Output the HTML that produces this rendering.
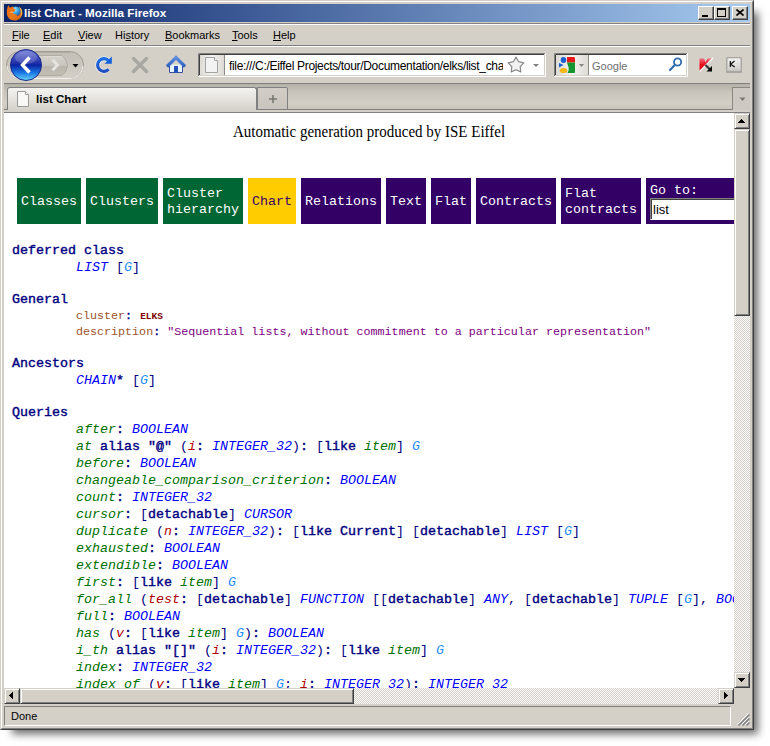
<!DOCTYPE html>
<html><head><meta charset="utf-8">
<style>
html,body{margin:0;padding:0;background:#fff;width:770px;height:746px;overflow:hidden;}
*{box-sizing:border-box;}
.a{position:absolute;}
#win{position:absolute;left:0;top:0;width:754px;height:730px;background:#d4d0c8;
 border:1px solid;border-color:#d4d0c8 #404040 #404040 #d4d0c8;
 box-shadow:8px 8px 8px -4px rgba(0,0,0,0.58);}
#win2{position:absolute;left:0;top:0;width:752px;height:728px;border:1px solid;border-color:#fff #808080 #808080 #fff;}
.ui{font-family:"Liberation Sans",sans-serif;}
#title{left:4px;top:4px;width:746px;height:18px;background:linear-gradient(to right,#0a246a,#a6caf0);}
#title .t{left:20px;top:1px;color:#fff;font:bold 11.7px "Liberation Sans",sans-serif;line-height:16px;white-space:nowrap;}
.tb{width:16px;height:14px;top:6px;background:#d4d0c8;border:1px solid;border-color:#fff #404040 #404040 #fff;box-shadow:inset -1px -1px 0 #808080;}
.menu{top:27px;font:11px "Liberation Sans",sans-serif;color:#000;white-space:nowrap;line-height:16px;}
.menu u{text-decoration:underline;text-underline-offset:1px;text-decoration-thickness:1px;}
.hl{background:#808080;height:1px;}
.wl{background:#fff;height:1px;}
pre,.m{font-family:"Liberation Mono",monospace;font-size:13.333px;margin:0;}
.ln{position:absolute;white-space:pre;font-family:"Liberation Mono",monospace;font-size:13.333px;line-height:17px;}
.k{color:#000080;font-weight:normal;-webkit-text-stroke:0.4px #000080;}
.c{color:#0000ff;font-style:italic;}
.g{color:#1e8cff;font-style:italic;}
.f{color:#007000;font-style:italic;}
.ar{color:#b00000;font-style:italic;}
.br{color:#000080;}
.ix{color:#a0522d;}
.s{color:#800080;}
.elks{color:#800000;font-weight:bold;font-size:9.5px;margin-left:1px;}
.nav{position:absolute;top:65px;height:46px;color:#fff;font-family:"Liberation Mono",monospace;font-size:13.333px;line-height:16px;padding:2px 4px 0;display:flex;align-items:center;white-space:pre;}
.ng{background:#006633;}
.np{background:#330066;}
.ny{background:#ffcc00;color:#330066;}
.chk{background-color:#fff;background-image:linear-gradient(45deg,#d4d0c8 25%,transparent 25%,transparent 75%,#d4d0c8 75%),linear-gradient(45deg,#d4d0c8 25%,transparent 25%,transparent 75%,#d4d0c8 75%);background-size:2px 2px;background-position:0 0,1px 1px;}
.btn3d{background:#d4d0c8;border:1px solid;border-color:#d4d0c8 #404040 #404040 #d4d0c8;box-shadow:inset 1px 1px 0 #fff,inset -1px -1px 0 #808080;}
</style></head>
<body>
<div id="win"><div id="win2"></div></div>

<!-- title bar -->
<div id="title" class="a">
  <svg class="a" style="left:1px;top:-1px" width="18" height="18" viewBox="0 0 18 18">
    <defs><radialGradient id="glb" cx="0.35" cy="0.3" r="0.8"><stop offset="0" stop-color="#a8f4ff"/><stop offset="0.45" stop-color="#40a8e8"/><stop offset="1" stop-color="#1a3c8a"/></radialGradient>
    <linearGradient id="fox" x1="0" y1="0" x2="1" y2="1"><stop offset="0" stop-color="#f06a10"/><stop offset="0.55" stop-color="#e87a18"/><stop offset="1" stop-color="#d86010"/></linearGradient>
    <linearGradient id="tail" x1="0" y1="0" x2="0" y2="1"><stop offset="0" stop-color="#f8e060"/><stop offset="1" stop-color="#f09020"/></linearGradient></defs>
    <circle cx="10.8" cy="8.6" r="5.2" fill="url(#glb)"/>
    <path d="M13.8 3.5 C16.5 5 17.8 8 17.3 11 C16.6 14.8 13.5 17.5 9.5 17.5 C5 17.5 2 14.5 1.8 10 C1.7 7.5 2.2 5 3.2 2.2 L5 4.8 L8 3.2 L9 5.8 L10.5 6.8 L9.2 8.8 L7.8 9.2 L8.5 10.8 L11 11.5 L12.5 13 C14.8 12.2 16 9.8 15.6 7.2 C15.3 5.8 14.6 4.5 13.8 3.5 Z" fill="url(#fox)"/>
    <path d="M14 3.8 C16.3 5.3 17.5 8 17.1 10.8 C16.8 12.5 16 14 14.8 15 C15.8 13 16.2 10.5 15.6 7.5 C15.3 6 14.8 4.8 14 3.8 Z" fill="url(#tail)"/>
    <path d="M5.5 9.2 L8 9.2" stroke="#ffe0b0" stroke-width="1" opacity="0.8"/>
  </svg>
  <div class="a t">list Chart - Mozilla Firefox</div>
</div>
<div class="a tb" style="left:698px"><div class="a" style="left:3px;top:8px;width:6px;height:2px;background:#000"></div></div>
<div class="a tb" style="left:714px"><div class="a" style="left:2px;top:1px;width:9px;height:9px;border:1px solid #000;border-top-width:2px"></div></div>
<div class="a tb" style="left:732px"><svg class="a" style="left:3px;top:2px" width="8" height="7" viewBox="0 0 8 7"><path d="M0.5 0.5 L7.5 6.5 M7.5 0.5 L0.5 6.5" stroke="#000" stroke-width="1.6"/></svg></div>

<!-- menu -->
<div class="a hl" style="left:4px;top:23px;width:746px"></div>
<div class="a wl" style="left:4px;top:24px;width:746px"></div>
<div class="a menu" style="left:12px"><u>F</u>ile</div>
<div class="a menu" style="left:43px"><u>E</u>dit</div>
<div class="a menu" style="left:78px"><u>V</u>iew</div>
<div class="a menu" style="left:115px">Hi<u>s</u>tory</div>
<div class="a menu" style="left:165px"><u>B</u>ookmarks</div>
<div class="a menu" style="left:232px"><u>T</u>ools</div>
<div class="a menu" style="left:273px"><u>H</u>elp</div>
<div class="a hl" style="left:4px;top:45px;width:746px"></div>
<div class="a wl" style="left:4px;top:46px;width:746px"></div>

<!-- toolbar -->
<!--TOOLBAR-->
<svg class="a" style="left:0;top:46px" width="754" height="37" viewBox="0 46 754 37">
 <defs>
  <linearGradient id="pill" x1="0" y1="0" x2="0" y2="1"><stop offset="0" stop-color="#c2beb6"/><stop offset="1" stop-color="#d4d0c8"/></linearGradient>
  <linearGradient id="fwd" x1="0" y1="0" x2="0" y2="1"><stop offset="0" stop-color="#d6d3cc"/><stop offset="0.5" stop-color="#c8c4bd"/><stop offset="0.5" stop-color="#b9b5ad"/><stop offset="1" stop-color="#c2beb6"/></linearGradient>
  <linearGradient id="back" x1="0" y1="0" x2="0" y2="1"><stop offset="0" stop-color="#6b77d6"/><stop offset="0.45" stop-color="#1f2fa8"/><stop offset="0.5" stop-color="#0a22a0"/><stop offset="0.75" stop-color="#1a78e6"/><stop offset="1" stop-color="#66d4fa"/></linearGradient>
  <linearGradient id="rel" x1="0" y1="0" x2="0" y2="1"><stop offset="0" stop-color="#1a6ee8"/><stop offset="1" stop-color="#1f4fc0"/></linearGradient>
  <linearGradient id="roof" x1="0" y1="0" x2="0" y2="1"><stop offset="0" stop-color="#5c8ee0"/><stop offset="1" stop-color="#3060c0"/></linearGradient>
  <linearGradient id="ibox" x1="0" y1="0" x2="1" y2="0"><stop offset="0" stop-color="#dedbd5"/><stop offset="0.5" stop-color="#f4f3f1"/><stop offset="1" stop-color="#dedbd5"/></linearGradient>
 </defs>
 <!-- back/forward pill -->
 <rect x="6.5" y="51.5" width="77" height="27" rx="13.5" fill="url(#pill)" stroke="#a29e96"/>
 <path d="M20 52.5 L70 52.5" stroke="#b0aca4" stroke-width="1"/>
 <path d="M7 66 A13 13 0 0 0 20 78.5 L70 78.5 A13 13 0 0 0 83 66" fill="none" stroke="#f2f1ee" stroke-width="1"/>
 <path d="M30 55.5 L62 55.5 Q67.5 60 67.5 65.5 Q67.5 71 62 75.5 L30 75.5 Z" fill="url(#fwd)" stroke="#aeaaa2"/>
 <path d="M44 56.5 L61.5 56.5" stroke="#dedbd5" stroke-width="1"/>
 <path d="M52.5 59.8 L57.5 65 L52.5 70.2" fill="none" stroke="#e6e4e0" stroke-width="3"/>
 <path d="M72.5 64 L78.5 64 L75.5 67.5 Z" fill="#000"/>
 <circle cx="26" cy="65" r="15.5" fill="url(#back)" stroke="#1c2a88" stroke-width="1"/>
 <ellipse cx="26" cy="57.5" rx="11" ry="6.5" fill="#fff" opacity="0.18"/>
 <path d="M29.5 57.5 L22.5 65 L29.5 72.5" fill="none" stroke="#fff" stroke-width="3.4" stroke-linejoin="miter"/>
 <!-- reload -->
 <path d="M108.2 60.4 A6.3 6.3 0 1 0 108.6 69.2" fill="none" stroke="#fff" stroke-width="5" opacity="0.5"/>
 <path d="M108.2 60.4 A6.3 6.3 0 1 0 108.6 69.2" fill="none" stroke="url(#rel)" stroke-width="3.2"/>
 <path d="M104.5 63.8 L111.8 63.8 L111.8 56.5 Z" fill="#1060e0"/>
 <!-- stop -->
 <path d="M133.5 58.5 L146.5 71.5 M146.5 58.5 L133.5 71.5" stroke="#a9a7a2" stroke-width="3.4" stroke-linecap="round"/>
 <!-- home -->
 <path d="M169.5 64.5 L169.5 72.5 L182.5 72.5 L182.5 64.5" fill="#e6f2fc" stroke="#3a4fa0"/>
 <path d="M167 66.5 L176 57.5 L185 66.5" fill="none" stroke="url(#roof)" stroke-width="3.2" stroke-linejoin="miter"/>
 <rect x="174" y="66" width="4" height="7" fill="#2454b8"/>
 <!-- url bar -->
 <rect x="198" y="53" width="347" height="24" fill="#fff"/>
 <path d="M198.5 76 L198.5 53.5 L545 53.5" fill="none" stroke="#808080"/>
 <path d="M199.5 75 L199.5 54.5 L544 54.5" fill="none" stroke="#404040"/>
 <path d="M198 76.5 L545.5 76.5 L545.5 53" fill="none" stroke="#fff"/>
 <path d="M199 75.5 L544.5 75.5 L544.5 54" fill="none" stroke="#d4d0c8"/>
 <rect x="200" y="55" width="24" height="20" fill="url(#ibox)"/>
 <rect x="224" y="55" width="1" height="20" fill="#8e8b86"/>
 <path d="M205.5 57.5 L214.5 57.5 L217.5 60.5 L217.5 72.5 L205.5 72.5 Z" fill="#f3f3f3" stroke="#a2a2a2"/>
 <path d="M214.5 57.5 L214.5 60.5 L217.5 60.5" fill="#fff" stroke="#a2a2a2"/>
 <path d="M516.0 57.1 L518.6 61.7 L523.8 62.8 L520.2 66.7 L520.8 71.9 L516.0 69.7 L511.2 71.9 L511.8 66.7 L508.2 62.8 L513.4 61.7 Z" fill="#f2f2f2" stroke="#8a8a8a" stroke-width="1.2" stroke-linejoin="round"/>
 <path d="M533 64 L539 64 L536 67 Z" fill="#808080"/>
 <!-- search -->
 <rect x="554" y="53" width="133" height="24" fill="#fff"/>
 <path d="M554.5 76 L554.5 53.5 L687 53.5" fill="none" stroke="#808080"/>
 <path d="M555.5 75 L555.5 54.5 L686 54.5" fill="none" stroke="#404040"/>
 <path d="M554 76.5 L687.5 76.5 L687.5 53" fill="none" stroke="#fff"/>
 <path d="M555 75.5 L686.5 75.5 L686.5 54" fill="none" stroke="#d4d0c8"/>
 <rect x="556" y="55" width="32" height="20" fill="url(#ibox)"/>
 <rect x="588" y="55" width="1" height="20" fill="#8e8b86"/>
 <ellipse cx="563.5" cy="60" rx="2.8" ry="3" fill="#1a5fd0"/>
 <path d="M559 63 L563.5 65 L559 67.5 Z" fill="#1a5fd0"/>
 <ellipse cx="563.5" cy="70.5" rx="3.8" ry="2.6" fill="#f2b81a"/>
 <path d="M567 57 L574 57 Q575 57 575 58.5 L575 62.5 L567 62.5 Z" fill="#e61818"/>
 <path d="M567 62.5 L575 62.5 L575 72 Q575 73 574 73 L567.5 73 Q569.5 70 568.5 67 Q567.5 64.5 567 62.5 Z" fill="#14962e"/>
 <path d="M579 64 L584 64 L581.5 67 Z" fill="#858585"/>
 <circle cx="677.6" cy="62" r="3.6" fill="none" stroke="#2f6db0" stroke-width="1.8"/>
 <path d="M675 64.8 L670 70" stroke="#2f6db0" stroke-width="2.2" stroke-linecap="round"/>
 <!-- kaspersky -->
 <defs><linearGradient id="kred" x1="0" y1="0" x2="0" y2="1"><stop offset="0" stop-color="#f07080"/><stop offset="0.45" stop-color="#e81020"/><stop offset="1" stop-color="#e00010"/></linearGradient>
 <linearGradient id="kkey" x1="0" y1="0" x2="0" y2="1"><stop offset="0" stop-color="#f2f2f0"/><stop offset="1" stop-color="#d2d1ce"/></linearGradient></defs>
 <path d="M699.5 58.5 L704 58.5 L705.5 62 L707.5 58.5 L712.5 58.5 L699.5 71.5 Z" fill="url(#kred)"/>
 <path d="M713 58 L699.5 71.5" stroke="#fff" stroke-width="1.3"/>
 <path d="M705.5 65 L709.5 69" stroke="#333" stroke-width="2.2"/>
 <path d="M712 66 L712 71.5 L706.5 71.5 Z" fill="#000"/>
 <!-- K button -->
 <rect x="726" y="57" width="16" height="16" rx="1.5" fill="#a8a6a2"/>
 <rect x="727" y="58" width="14" height="13" rx="1" fill="#c8c7c4"/>
 <rect x="728" y="58.5" width="12" height="11" fill="url(#kkey)"/>
 <path d="M730.3 61 L730.3 67 M734.5 61 L730.6 64.2 L734.7 67" fill="none" stroke="#111" stroke-width="1.2"/>
</svg>
<div class="a ui" style="left:229px;top:59px;width:274px;overflow:hidden;white-space:nowrap;font-size:12px;letter-spacing:-0.32px;line-height:14px;color:#000">file:///C:/Eiffel Projects/tour/Documentation/elks/list_chart.html</div>
<div class="a ui" style="left:592px;top:60px;white-space:nowrap;font-size:11px;line-height:13px;color:#6e6e6e">Google</div>
<!--/TOOLBAR-->

<div class="a hl" style="left:4px;top:83px;width:746px"></div>

<!-- tab strip -->
<div class="a" style="left:4px;top:84px;width:746px;height:28px;background:linear-gradient(#b5b1a9 0%,#c9c5bd 30%,#d3cfc7 70%,#c9c5bd 88%,#d4d0c8 89%,#d4d0c8 100%)"></div>
<div class="a hl" style="left:4px;top:109px;width:746px"></div>
<div class="a" style="left:7px;top:87px;width:250px;height:23px;background:linear-gradient(#f4f3f0 0%,#e2dfda 60%,#d6d3cc 100%);border:1px solid #808080;border-bottom:none;border-radius:3px 3px 0 0"></div>
<div class="a ui" style="left:36px;top:92px;font-weight:bold;font-size:11.6px;line-height:14px">list Chart</div>
<svg class="a" style="left:16px;top:90px" width="14" height="18" viewBox="16 90 14 18">
 <path d="M17.5 91.5 L25.5 91.5 L28.5 94.5 L28.5 106.5 L17.5 106.5 Z" fill="#f8f8f6" stroke="#9a9a98"/>
 <path d="M25.5 91.5 L25.5 94.5 L28.5 94.5" fill="#fff" stroke="#9a9a98"/>
</svg>
<div class="a" style="left:256px;top:87px;width:32px;height:23px;background:linear-gradient(#d2cec7,#c9c5be);border:1px solid #808080;border-left-width:2px;border-radius:2px 2px 0 0"></div>
<svg class="a" style="left:266px;top:92px" width="14" height="14" viewBox="0 0 14 14"><path d="M7 3 L7 11 M3 7 L11 7" stroke="#7a7874" stroke-width="1.6"/></svg>
<div class="a" style="left:732px;top:87px;width:18px;height:23px;background:#cdc9c2;border-left:1px solid #8a8782;border-top:1px solid #8a8782"></div>
<svg class="a" style="left:739px;top:97px" width="7" height="5" viewBox="0 0 7 5"><path d="M0.5 0.5 L6.5 0.5 L3.5 4 Z" fill="#7a7874"/></svg>

<div class="a hl" style="left:4px;top:112px;width:746px"></div>

<!-- content -->
<div class="a" id="content" style="left:4px;top:113px;width:730px;height:575px;background:#fff;overflow:hidden">
<!--NAV-->
<div class="a" style="left:0;top:10px;width:730px;text-align:center;font:16px 'Liberation Serif',serif;line-height:18px;color:#000;transform:scaleX(0.936);transform-origin:365px 0">Automatic generation produced by ISE Eiffel</div>
<div class="nav ng" style="left:13px;width:64px">Classes</div>
<div class="nav ng" style="left:82px;width:72px">Clusters</div>
<div class="nav ng" style="left:159px;width:80px">Cluster
hierarchy</div>
<div class="nav ny" style="left:244px;width:48px">Chart</div>
<div class="nav np" style="left:297px;width:80px">Relations</div>
<div class="nav np" style="left:382px;width:40px">Text</div>
<div class="nav np" style="left:427px;width:40px">Flat</div>
<div class="nav np" style="left:472px;width:80px">Contracts</div>
<div class="nav np" style="left:557px;width:80px">Flat
contracts</div>
<div class="a np" style="left:642px;top:65px;width:120px;height:46px"></div>
<div class="a m" style="left:646px;top:70px;color:#fff;line-height:16px">Go to:</div>
<div class="a" style="left:646px;top:85px;width:120px;height:22px;background:#fff;border:1px solid;border-color:#808080 #fff #fff #808080;box-shadow:inset 1px 1px 0 #404040"></div>
<div class="a ui" style="left:649px;top:89px;font-size:13px;line-height:15px;color:#000">list</div>
<!--/NAV-->
<!--CONTENT-->
<div class="ln" style="left:8px;top:129px;"><span class="k">deferred</span> <span class="k">class</span></div>
<div class="ln" style="left:72px;top:146px;"><span class="c">LIST</span> <span class="br">[</span><span class="g">G</span><span class="br">]</span></div>
<div class="ln" style="left:8px;top:178px;"><span class="k">General</span></div>
<div class="ln" style="left:72px;top:194px;font-size:11.7px;margin-top:1px"><span class="ix">cluster</span><span class="k">:</span> <span class="elks">ELKS</span></div>
<div class="ln" style="left:72px;top:210px;font-size:11.7px;margin-top:1px"><span class="ix">description</span><span class="k">:</span> <span class="s">&quot;Sequential lists, without commitment to a particular representation&quot;</span></div>
<div class="ln" style="left:8px;top:242px;"><span class="k">Ancestors</span></div>
<div class="ln" style="left:72px;top:259px;"><span class="c">CHAIN</span><span class="k">*</span> <span class="br">[</span><span class="g">G</span><span class="br">]</span></div>
<div class="ln" style="left:8px;top:291px;"><span class="k">Queries</span></div>
<div class="ln" style="left:72px;top:308px;"><span class="f">after</span><span class="k">:</span> <span class="c">BOOLEAN</span></div>
<div class="ln" style="left:72px;top:325px;"><span class="f">at</span> <span class="k">alias</span> <span class="k">&quot;@&quot;</span> <span class="br">(</span><span class="ar">i</span><span class="k">:</span> <span class="c">INTEGER_32</span><span class="br">)</span><span class="k">:</span> <span class="br">[</span><span class="k">like</span> <span class="f">item</span><span class="br">]</span> <span class="g">G</span></div>
<div class="ln" style="left:72px;top:342px;"><span class="f">before</span><span class="k">:</span> <span class="c">BOOLEAN</span></div>
<div class="ln" style="left:72px;top:359px;"><span class="f">changeable_comparison_criterion</span><span class="k">:</span> <span class="c">BOOLEAN</span></div>
<div class="ln" style="left:72px;top:376px;"><span class="f">count</span><span class="k">:</span> <span class="c">INTEGER_32</span></div>
<div class="ln" style="left:72px;top:393px;"><span class="f">cursor</span><span class="k">:</span> <span class="br">[</span><span class="k">detachable</span><span class="br">]</span> <span class="c">CURSOR</span></div>
<div class="ln" style="left:72px;top:410px;"><span class="f">duplicate</span> <span class="br">(</span><span class="ar">n</span><span class="k">:</span> <span class="c">INTEGER_32</span><span class="br">)</span><span class="k">:</span> <span class="br">[</span><span class="k">like</span> <span class="k">Current</span><span class="br">]</span> <span class="br">[</span><span class="k">detachable</span><span class="br">]</span> <span class="c">LIST</span> <span class="br">[</span><span class="g">G</span><span class="br">]</span></div>
<div class="ln" style="left:72px;top:427px;"><span class="f">exhausted</span><span class="k">:</span> <span class="c">BOOLEAN</span></div>
<div class="ln" style="left:72px;top:444px;"><span class="f">extendible</span><span class="k">:</span> <span class="c">BOOLEAN</span></div>
<div class="ln" style="left:72px;top:461px;"><span class="f">first</span><span class="k">:</span> <span class="br">[</span><span class="k">like</span> <span class="f">item</span><span class="br">]</span> <span class="g">G</span></div>
<div class="ln" style="left:72px;top:478px;"><span class="f">for_all</span> <span class="br">(</span><span class="ar">test</span><span class="k">:</span> <span class="br">[</span><span class="k">detachable</span><span class="br">]</span> <span class="c">FUNCTION</span> <span class="br">[</span><span class="br">[</span><span class="k">detachable</span><span class="br">]</span> <span class="c">ANY</span><span class="br">,</span> <span class="br">[</span><span class="k">detachable</span><span class="br">]</span> <span class="c">TUPLE</span> <span class="br">[</span><span class="g">G</span><span class="br">]</span><span class="br">,</span> <span class="c">BOOLEAN</span><span class="br">]</span><span class="br">)</span><span class="k">:</span> <span class="c">BOOLEAN</span></div>
<div class="ln" style="left:72px;top:495px;"><span class="f">full</span><span class="k">:</span> <span class="c">BOOLEAN</span></div>
<div class="ln" style="left:72px;top:512px;"><span class="f">has</span> <span class="br">(</span><span class="ar">v</span><span class="k">:</span> <span class="br">[</span><span class="k">like</span> <span class="f">item</span><span class="br">]</span> <span class="g">G</span><span class="br">)</span><span class="k">:</span> <span class="c">BOOLEAN</span></div>
<div class="ln" style="left:72px;top:529px;"><span class="f">i_th</span> <span class="k">alias</span> <span class="k">&quot;[]&quot;</span> <span class="br">(</span><span class="ar">i</span><span class="k">:</span> <span class="c">INTEGER_32</span><span class="br">)</span><span class="k">:</span> <span class="br">[</span><span class="k">like</span> <span class="f">item</span><span class="br">]</span> <span class="g">G</span></div>
<div class="ln" style="left:72px;top:546px;"><span class="f">index</span><span class="k">:</span> <span class="c">INTEGER_32</span></div>
<div class="ln" style="left:72px;top:563px;"><span class="f">index_of</span> <span class="br">(</span><span class="ar">v</span><span class="k">:</span> <span class="br">[</span><span class="k">like</span> <span class="f">item</span><span class="br">]</span> <span class="g">G</span><span class="br">;</span> <span class="ar">i</span><span class="k">:</span> <span class="c">INTEGER_32</span><span class="br">)</span><span class="k">:</span> <span class="c">INTEGER_32</span></div>
<!--/CONTENT-->
</div>

<!-- v scrollbar -->
<div class="a chk" style="left:734px;top:113px;width:16px;height:575px"></div>
<div class="a btn3d" style="left:734px;top:113px;width:16px;height:16px"></div>
<div class="a btn3d" style="left:734px;top:129px;width:16px;height:187px"></div>
<div class="a btn3d" style="left:734px;top:672px;width:16px;height:16px"></div>
<!-- h scrollbar -->
<div class="a chk" style="left:4px;top:688px;width:730px;height:16px"></div>
<div class="a btn3d" style="left:4px;top:688px;width:16px;height:16px"></div>
<div class="a btn3d" style="left:20px;top:688px;width:334px;height:16px"></div>
<div class="a btn3d" style="left:718px;top:688px;width:16px;height:16px"></div>
<div class="a" style="left:734px;top:688px;width:16px;height:16px;background:#d4d0c8"></div>

<!-- status bar -->
<div class="a" style="left:4px;top:706px;width:727px;height:20px;border:1px solid;border-color:#808080 #fff #fff #808080"></div>
<div class="a ui" style="left:11px;top:710px;font-size:11px;line-height:13px">Done</div>

<svg class="a" style="left:0;top:0" width="770" height="746" viewBox="0 0 770 746" shape-rendering="crispEdges">
 <path d="M738 123h7v-1h-1v-1h-1v-1h-1v-1h-1v1h-1v1h-1v1h-1z" fill="#000"/>
 <path d="M738 678h7v1h-1v1h-1v1h-1v1h-1v-1h-1v-1h-1v-1h-1z" fill="#000"/>
 <path d="M724 692v7h1v-1h1v-1h1v-1h1v-1h-1v-1h-1v-1h-1v-1z" fill="#000"/>
 <path d="M13 692v7h-1v-1h-1v-1h-1v-1h-1v-1h1v-1h1v-1h1v-1z" fill="#000"/>
 <g stroke-width="1" shape-rendering="auto">
  <path d="M738.5 725.5 L749.5 714.5 M742.5 725.5 L749.5 718.5 M746.5 725.5 L749.5 722.5" stroke="#808080" stroke-width="1.5"/>
  <path d="M737.5 724.5 L748.5 713.5 M741.5 724.5 L748.5 717.5 M745.5 724.5 L748.5 721.5" stroke="#fff" stroke-width="1"/>
 </g>
</svg>
</body></html>
